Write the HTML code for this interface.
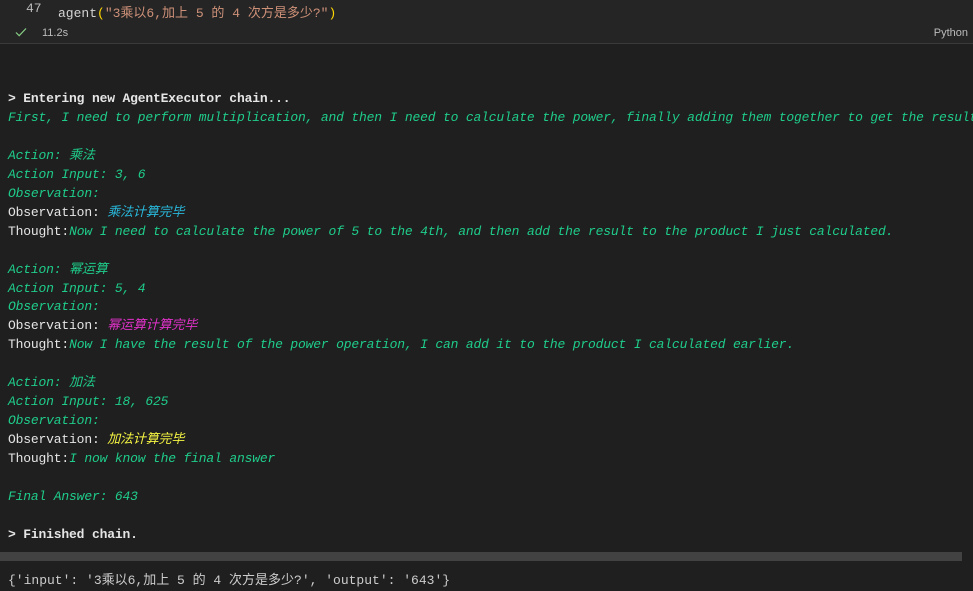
<!DOCTYPE html>
<html><head><meta charset="utf-8"><style>
body{margin:0;width:973px;height:591px;background:#1f1f1f;overflow:hidden;position:relative;font-family:"Liberation Mono","Noto Sans CJK SC",monospace;font-size:13px;color:#cccccc}
.cell{position:absolute;left:0;top:0;width:973px;height:43px;background:#252526;border-bottom:1px solid #3a3a3a}
.ln{position:absolute;left:26px;top:1px;color:#bbbbbb;font-size:13px}
.code{position:absolute;left:58px;top:2px;color:#d4d4d4}
.str{color:#ce9178}.par{color:#ffd700}
.chk{position:absolute;left:15px;top:27px}
.time{position:absolute;left:42px;top:27px;font-family:"Liberation Sans",sans-serif;font-size:11px;color:#bbbbbb}
.py{position:absolute;right:5px;top:27px;font-family:"Liberation Sans",sans-serif;font-size:11px;color:#bbbbbb}
.out{position:absolute;left:8px;top:90px;line-height:18.95px;white-space:pre;letter-spacing:-0.17px}
.g{color:#1fcc8a;font-style:italic}
.b{font-weight:bold;color:#e5e5e5}
.c{color:#29b8db;font-style:italic}
.m{color:#e031c9;font-style:italic}
.y{color:#f5f543;font-style:italic}
.w{color:#e5e5e5}
.sb{position:absolute;left:0;top:552px;width:962px;height:9px;background:#424242}
.res{position:absolute;left:8px;top:569px;white-space:pre;color:#cccccc}
</style></head><body>
<div class="cell">
<div class="ln">47</div>
<div class="code">agent<span class="par">(</span><span class="str">"3乘以6,加上 5 的 4 次方是多少?"</span><span class="par">)</span></div>
<svg class="chk" width="12" height="10" viewBox="0 0 12 10"><path d="M1 5.5 L4.2 8.7 L11 1.5" fill="none" stroke="#89d185" stroke-width="1.2"/></svg>
<div class="time">11.2s</div>
<div class="py">Python</div>
</div>
<div class="out"><span class="b">&gt; Entering new AgentExecutor chain...</span>
<span class="g">First, I need to perform multiplication, and then I need to calculate the power, finally adding them together to get the result.</span>

<span class="g">Action: 乘法</span>
<span class="g">Action Input: 3, 6</span>
<span class="g">Observation:</span>
<span class="w">Observation: </span><span class="c">乘法计算完毕</span>
<span class="w">Thought:</span><span class="g">Now I need to calculate the power of 5 to the 4th, and then add the result to the product I just calculated.</span>

<span class="g">Action: 幂运算</span>
<span class="g">Action Input: 5, 4</span>
<span class="g">Observation:</span>
<span class="w">Observation: </span><span class="m">幂运算计算完毕</span>
<span class="w">Thought:</span><span class="g">Now I have the result of the power operation, I can add it to the product I calculated earlier.</span>

<span class="g">Action: 加法</span>
<span class="g">Action Input: 18, 625</span>
<span class="g">Observation:</span>
<span class="w">Observation: </span><span class="y">加法计算完毕</span>
<span class="w">Thought:</span><span class="g">I now know the final answer</span>

<span class="g">Final Answer: 643</span>

<span class="b">&gt; Finished chain.</span></div>
<div class="sb"></div>
<div class="res">{'input': '3乘以6,加上 5 的 4 次方是多少?', 'output': '643'}</div>
</body></html>
